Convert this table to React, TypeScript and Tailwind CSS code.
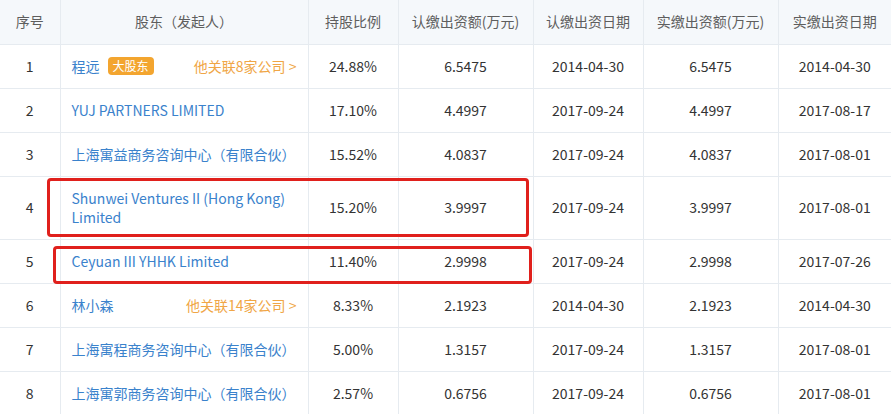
import React from "react";

type Row = {
  no: number;
  name: React.ReactNode;
  badge?: boolean;
  rel?: string;
  pct: string;
  sub: string;
  subDate: string;
  paid: string;
  paidDate: string;
  tall?: boolean;
};

const rows: Row[] = [
  { no: 1, name: "程远", badge: true, rel: "他关联8家公司 >", pct: "24.88%", sub: "6.5475", subDate: "2014-04-30", paid: "6.5475", paidDate: "2014-04-30" },
  { no: 2, name: "YUJ PARTNERS LIMITED", pct: "17.10%", sub: "4.4997", subDate: "2017-09-24", paid: "4.4997", paidDate: "2017-08-17" },
  { no: 3, name: "上海寓益商务咨询中心（有限合伙）", pct: "15.52%", sub: "4.0837", subDate: "2017-09-24", paid: "4.0837", paidDate: "2017-08-01" },
  { no: 4, name: (<>Shunwei Ventures II (Hong Kong)<br />Limited</>), pct: "15.20%", sub: "3.9997", subDate: "2017-09-24", paid: "3.9997", paidDate: "2017-08-01", tall: true },
  { no: 5, name: "Ceyuan III YHHK Limited", pct: "11.40%", sub: "2.9998", subDate: "2017-09-24", paid: "2.9998", paidDate: "2017-07-26" },
  { no: 6, name: "林小森", rel: "他关联14家公司 >", pct: "8.33%", sub: "2.1923", subDate: "2014-04-30", paid: "2.1923", paidDate: "2014-04-30" },
  { no: 7, name: "上海寓程商务咨询中心（有限合伙）", pct: "5.00%", sub: "1.3157", subDate: "2017-09-24", paid: "1.3157", paidDate: "2017-08-01" },
  { no: 8, name: "上海寓郭商务咨询中心（有限合伙）", pct: "2.57%", sub: "0.6756", subDate: "2017-09-24", paid: "0.6756", paidDate: "2017-08-01" },
];

const headers = ["序号", "股东（发起人）", "持股比例", "认缴出资额(万元)", "认缴出资日期", "实缴出资额(万元)", "实缴出资日期"];
const widths = ["w-[60px]", "w-[248px]", "w-[90px]", "w-[135px]", "w-[110px]", "w-[135px]", "w-[113px]"];

export default function App() {
  return (
    <div
      className="relative w-[891px] h-[414px] overflow-hidden bg-white text-[14px] text-[#333]"
      style={{ fontFamily: '"Noto Sans CJK SC", "Noto Sans", sans-serif' }}
    >
      <table className="w-[891px] table-fixed border-collapse">
        <colgroup>
          {widths.map((w, i) => (
            <col key={i} className={w} />
          ))}
        </colgroup>
        <thead>
          <tr className="h-[44px] bg-[#f5f8fb]">
            {headers.map((h, i) => (
              <th
                key={i}
                className={`font-normal text-[#5e5e5e] text-center border-b border-[#e6ebf0] ${i > 0 ? "border-l" : ""} p-0`}
              >
                {h}
              </th>
            ))}
          </tr>
        </thead>
        <tbody>
          {rows.map((r) => (
            <tr key={r.no} className={r.tall ? "h-[63px]" : "h-[44px]"}>
              <td className="text-center border-b border-[#e6ebf0] p-0">{r.no}</td>
              <td className="border-b border-l border-[#e6ebf0] px-[11px] py-0">
                <div className="flex items-center justify-between">
                  <div className="flex items-center leading-[19px] text-[#3a82cc]">
                    <span>{r.name}</span>
                    {r.badge && (
                      <span className="ml-[8px] rounded-[4px] bg-[#f3a52f] px-[5px] text-[12px] leading-[18px] text-white">
                        大股东
                      </span>
                    )}
                  </div>
                  {r.rel && <span className="text-[#f0a646]">{r.rel}</span>}
                </div>
              </td>
              <td className="text-center border-b border-l border-[#e6ebf0] p-0">{r.pct}</td>
              <td className="text-center border-b border-l border-[#e6ebf0] p-0">{r.sub}</td>
              <td className="text-center border-b border-l border-[#e6ebf0] p-0">{r.subDate}</td>
              <td className="text-center border-b border-l border-[#e6ebf0] p-0">{r.paid}</td>
              <td className="text-center border-b border-l border-[#e6ebf0] p-0">{r.paidDate}</td>
            </tr>
          ))}
        </tbody>
      </table>
      <div className="pointer-events-none absolute left-[47px] top-[178px] h-[59px] w-[482px] rounded-[4px] border-[3px] border-[#e0201c]" />
      <div className="pointer-events-none absolute left-[53px] top-[246px] h-[38px] w-[479px] rounded-[4px] border-[3px] border-[#e0201c]" />
    </div>
  );
}
